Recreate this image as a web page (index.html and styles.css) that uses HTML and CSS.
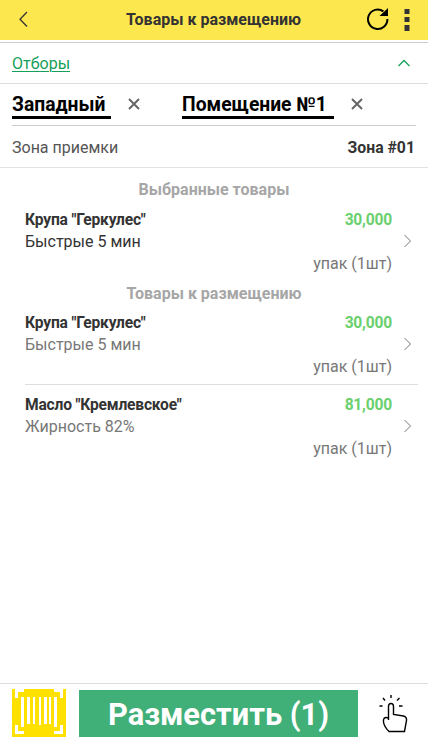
FILE: index.html
```html
<!DOCTYPE html>
<html lang="ru">
<head>
<meta charset="utf-8">
<title>Товары к размещению</title>
<link rel="stylesheet" href="styles.css">
</head>
<body>
<div class="app">
  <header class="topbar">
    <svg class="back" width="12" height="18" viewBox="0 0 12 18"><path d="M10 1L3 8.200L10 15.500"/></svg>
    <h1>Товары к размещению</h1>
    <svg class="reload" width="24" height="24" viewBox="0 0 24 24"><path class="arc" d="M17.400 3.400A9.700 9.700 0 1 0 21.400 11"/><path d="M22 0V8H13.500Z"/></svg>
    <svg class="more" width="6" height="22" viewBox="0 0 6 22"><path d="M0.500 0h5v5h-5zM0.500 8h5v5h-5zM0.500 16h5v6h-5z"/></svg>
  </header>
  <section class="filters">
    <a class="filters-link">Отборы</a>
    <svg width="14" height="10" viewBox="0 0 14 10"><path d="M1.500 7L7 1.500L12.500 7"/></svg>
  </section>
  <section class="place">
    <div class="chips">
      <span class="chip warehouse">Западный</span>
      <svg class="close" width="12" height="12" viewBox="0 0 12 12"><path d="M1 1L11 11M11 1L1 11"/></svg>
      <span class="chip room">Помещение №1</span>
      <svg class="close" width="12" height="12" viewBox="0 0 12 12"><path d="M1 1L11 11M11 1L1 11"/></svg>
    </div>
    <div class="zone"><span>Зона приемки</span><b>Зона #01</b></div>
  </section>
  <main>
    <h2>Выбранные товары</h2>
    <article class="item selected">
      <div class="info"><b>Крупа "Геркулес"</b><span>Быстрые 5 мин</span></div>
      <div class="amount"><b>30,000</b><span>упак (1шт)</span></div>
      <svg width="9" height="14" viewBox="0 0 9 14"><path d="M1.500 1L7.500 7L1.500 13"/></svg>
    </article>
    <h2 class="pending">Товары к размещению</h2>
    <article class="item">
      <div class="info"><b>Крупа "Геркулес"</b><span>Быстрые 5 мин</span></div>
      <div class="amount"><b>30,000</b><span>упак (1шт)</span></div>
      <svg width="9" height="14" viewBox="0 0 9 14"><path d="M1.500 1L7.500 7L1.500 13"/></svg>
    </article>
    <hr>
    <article class="item">
      <div class="info"><b>Масло "Кремлевское"</b><span>Жирность 82%</span></div>
      <div class="amount"><b>81,000</b><span>упак (1шт)</span></div>
      <svg width="9" height="14" viewBox="0 0 9 14"><path d="M1.500 1L7.500 7L1.500 13"/></svg>
    </article>
  </main>
  <footer>
    <svg class="barcode" width="54" height="48" viewBox="0 0 54 48" shape-rendering="crispEdges">
      <rect width="54" height="48" fill="#ffe100"/>
      <path fill="#fff" d="M3 0H12V3H6V9H3ZM42 0H51V9H48V3H42ZM3 36H6V42H12V45H3ZM48 36H51V45H42V42H48ZM9 8h3v30h-3zM15 8h3v27h-3zM21 8h2v27h-2zM27 8h2v28h-2zM32 8h3v27h-3zM37 8h2v27h-2zM42 8h3v30h-3z"/>
    </svg>
    <button class="submit">Разместить (1)</button>
    <svg class="tap" width="30" height="40" viewBox="0 0 30 40"><path d="M9.500 26V12.500C9.500 8.500 14.500 8.500 14.500 12.500V20.500L24.500 22Q28 23 27.500 26.500L25.500 37.500H10Q5 32.500 4.500 28V26Q5 22.500 9.500 24"/><path d="M12 1V4M4 4L6 6.500M20.500 4L18 6.500M.5 12H3.500M20 12H23.500"/></svg>
  </footer>
</div>
</body>
</html>
```

FILE: styles.css
```css
* { box-sizing: border-box; }
body { margin: 0; background: #fff; color: #333; font: 16px/22px Roboto, sans-serif; }
svg { display: block; flex: none; fill: none; stroke-linecap: butt; }
h1, h2 { margin: 0; font-size: 16px; font-weight: 700; }
.app { width: 428px; height: 741px; display: flex; flex-direction: column; overflow: hidden; }
.topbar { height: 40px; background: #fde74f; display: flex; align-items: center; padding: 0 18px 0 17px; }
.back { stroke: #333; stroke-width: 1.3; }
.topbar h1 { flex: 1; padding-left: 97px; color: #333; }
.reload { margin-right: 14px; fill: #000; }
.reload .arc { fill: none; stroke: #000; stroke-width: 2; }
.more { fill: #333; }
.filters { margin-top: 2px; height: 42px; border-top: 1px solid #ccc; border-bottom: 1px solid #ddd; display: flex; align-items: center; justify-content: space-between; padding: 1px 17px 0 12px; }
.filters svg { stroke: #15a05a; stroke-width: 1.3; }
.filters-link { color: #15a05a; text-decoration: underline; text-decoration-thickness: 1px; text-underline-offset: 2px; }
.place { height: 84px; padding: 0 12px; border-bottom: 1px solid #e2e2e2; }
.chips { height: 42px; border-bottom: 1px solid #ccc; display: flex; align-items: flex-start; padding-top: 7px; }
.chip { height: 28px; border-bottom: 3px solid #000; color: #000; font-size: 19.3px; font-weight: 700; line-height: 27px; white-space: nowrap; }
.warehouse { width: 99px; }
.room { width: 152px; margin-left: 42px; }
.close { margin: 7px 0 0 17px; stroke: #666; stroke-width: 2; }
.zone { display: flex; justify-content: space-between; padding: 11px 1px 0 0; color: #555; }
.zone b { color: #333; font-size: 15.8px; }
main { flex: 1; padding-top: 11px; }
h2 { text-align: center; color: #a6a6a6; height: 22px; }
.pending { height: 21px; }
.item { display: flex; height: 81px; padding: 8px 16px 0 25px; }
.selected { height: 82px; }
.info, .amount { display: flex; flex-direction: column; }
.info { flex: 1; }
.info b, .amount b { font-size: 15.6px; letter-spacing: -0.2px; }
.info b { color: #333; }
.info span { color: #777; }
.selected .info span { color: #333; }
.amount { text-align: right; color: #777; }
.amount b { color: #6ad06e; margin-bottom: 22px; }
.item svg { margin: 25px 0 0 11px; stroke: #777; stroke-width: 1; }
hr { height: 1px; margin: -1px 10px 1px 25px; border: 0; background: #ddd; }
footer { height: 58px; border-top: 1px solid #ddd; display: flex; padding: 5px 18px 0 12px; }
.submit { width: 279px; height: 47px; margin: 1px 0 0 13px; padding: 2px 0 0; border: 0; background: #41af78; color: #fff; font: 700 30.8px/45px Roboto, sans-serif; }
.tap { margin: 5px 0 0 21px; stroke: #000; stroke-width: 1.400; }
```
